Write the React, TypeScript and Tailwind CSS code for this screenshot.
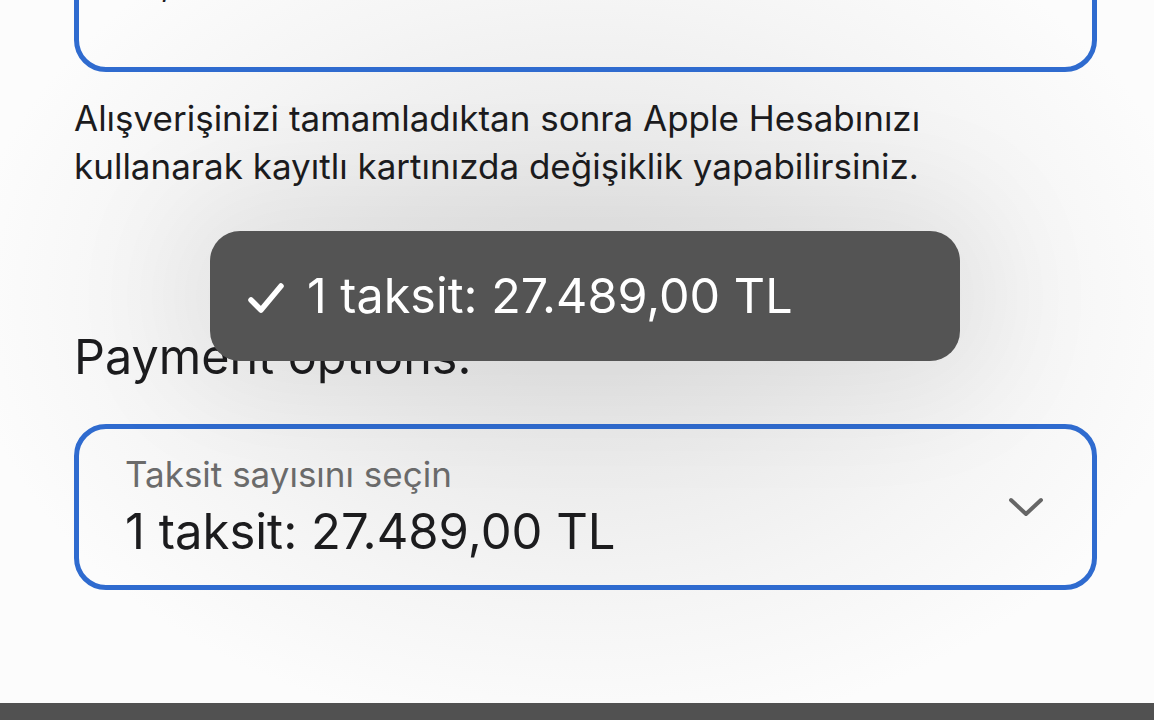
import React from "react";

export default function App() {
  return (
    <div
      className="relative w-[1154px] h-[720px] overflow-hidden bg-[radial-gradient(ellipse_620px_440px_at_585px_300px,#e3e3e3_0%,#ebebeb_35%,#f5f5f5_70%,#fcfcfc_100%)] text-[#1c1c1e]"
      style={{ fontFamily: "Inter, 'Noto Sans', sans-serif" }}
    >
      <div className="ml-[74px] w-[1023px] flex flex-col">
        <div className="-mt-[100px] h-[172px] rounded-[32px] border-[5px] border-[#2f6bcf] px-[46px] pt-[58px]">
          <div className="text-[35px] leading-[40px]">12,</div>
        </div>
        <p className="mt-[22px] text-[35px] leading-[48px]">
          Alışverişinizi tamamladıktan sonra Apple Hesabınızı
          <br />
          kullanarak kayıtlı kartınızda değişiklik yapabilirsiniz.
        </p>
        <h2 className="mt-[139px] text-[48.5px] leading-[56px] font-normal">Payment options:</h2>
        <div className="mt-[39px] h-[166px] rounded-[32px] border-[5px] border-[#2f6bcf] pl-[46px] pr-[48px] flex items-center justify-between">
          <div className="flex flex-col">
            <span className="text-[35px] leading-[40px] text-[#6b6b6b]">Taksit sayısını seçin</span>
            <span className="mt-[10px] text-[49px] leading-[56px]">1 taksit: 27.489,00 TL</span>
          </div>
          <svg width="36" height="24" viewBox="0 0 36 24">
            <path d="M3 5 L18 19 L33 5" fill="none" stroke="#666" strokeWidth="4" strokeLinecap="round" strokeLinejoin="round" />
          </svg>
        </div>
      </div>

      <div className="absolute left-[210px] top-[231px] w-[750px] h-[130px] rounded-[30px] bg-[#545454] flex items-center pl-[37px] text-white shadow-[0_0_120px_40px_rgba(0,0,0,0.06)]">
        <svg width="38" height="34" viewBox="0 0 38 34" className="mr-[22px] mt-[4px]">
          <path d="M4 19 L14 29 L34 5" fill="none" stroke="#fff" strokeWidth="5.5" strokeLinecap="round" strokeLinejoin="round" />
        </svg>
        <span className="text-[48.5px] leading-[56px]">1 taksit: 27.489,00 TL</span>
      </div>

      <div className="absolute left-0 right-0 bottom-0 h-[17px] bg-[#515151]" />
    </div>
  );
}
